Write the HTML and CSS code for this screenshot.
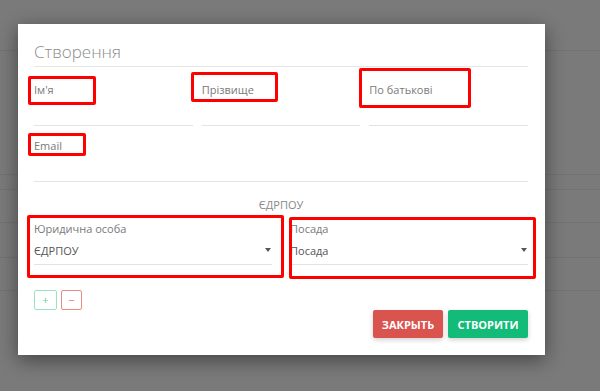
FILE: index.html
```html
<!DOCTYPE html>
<html lang="uk">
<head>
  <meta charset="UTF-8">
  <meta name="viewport" content="width=device-width, initial-scale=1.0">
  <title>Створення</title>
  <link rel="stylesheet" href="styles.css">
</head>
<body>

  <!-- Page behind the dimmed overlay -->
  <div class="page">
    <div class="page-row r1"></div>
    <div class="page-row r2"></div>
    <div class="page-row r3"></div>
    <div class="page-row r4"></div>
    <div class="page-row r5"></div>
    <div class="page-row r6"></div>
  </div>

  <div class="modal">
    <h2 class="modal-title">Створення</h2>

    <!-- Name fields -->
    <div class="name-row">
      <div class="field">
        <label>Ім'я</label>
        <div class="input"></div>
      </div>
      <div class="field">
        <label>Прізвище</label>
        <div class="input"></div>
      </div>
      <div class="field">
        <label>По батькові</label>
        <div class="input"></div>
      </div>
    </div>

    <div class="field email">
      <label>Email</label>
      <div class="input"></div>
    </div>

    <div class="section-title">ЄДРПОУ</div>

    <!-- Selects -->
    <div class="select-row">
      <div class="select-field">
        <label>Юридична особа</label>
        <div class="select">ЄДРПОУ <span class="caret"></span></div>
      </div>
      <div class="select-field">
        <label>Посада</label>
        <div class="select">Посада <span class="caret"></span></div>
      </div>
    </div>

    <div class="add-remove">
      <button class="btn-small plus">+</button>
      <button class="btn-small minus">&minus;</button>
    </div>

    <div class="modal-footer">
      <button class="btn btn-close">Закрыть</button>
      <button class="btn btn-create">Створити</button>
    </div>

    <!-- Red annotation frames drawn over the form -->
    <div class="mark m-name"></div>
    <div class="mark m-surname"></div>
    <div class="mark m-patronymic"></div>
    <div class="mark m-email"></div>
    <div class="mark m-company"></div>
    <div class="mark m-position"></div>
  </div>

</body>
</html>
```

FILE: styles.css
```css
body {
  margin: 0;
  height: 391px;
  overflow: hidden;
  background-color: #7a7a7a;
  font-family: "Open Sans", Arial, sans-serif;
}

.page-row {
  border-bottom: 1px solid #727272;
}

.r1 { height: 50px; }
.r2 { height: 123px; }
.r3 { height: 14px; }
.r4 { height: 32px; }
.r5 { height: 34px; }
.r6 { height: 32px; }

.modal {
  position: absolute;
  left: 18px;
  top: 24px;
  width: 527px;
  height: 331px;
  box-sizing: border-box;
  padding: 17px 17px 0 16px;
  background-color: white;
  box-shadow: 0 5px 18px rgba(0, 0, 0, 0.45);
}

.modal-title {
  margin: 0;
  padding-bottom: 3px;
  font-size: 17px;
  line-height: 22px;
  font-weight: 300;
  color: #8c8c8c;
  border-bottom: 1px solid #e6e6e6;
}

.name-row {
  display: grid;
  grid-template-columns: 1fr 1fr 1fr;
  gap: 9px;
  padding-top: 15px;
}

label {
  display: block;
  font-size: 11px;
  line-height: 16px;
  color: #7a7a7a;
}

.input {
  height: 27px;
  border-bottom: 1px solid #e3e3e3;
}

.email {
  padding-top: 12px;
}

.section-title {
  margin-top: 15px;
  text-align: center;
  font-size: 11px;
  line-height: 16px;
  color: #888;
}

.select-row {
  display: grid;
  grid-template-columns: 1fr 1fr;
  gap: 18px;
  margin-top: 8px;
}

.select {
  position: relative;
  height: 25px;
  margin-top: 3px;
  padding-top: 3px;
  box-sizing: border-box;
  font-size: 11px;
  line-height: 16px;
  color: #555;
  border-bottom: 1px solid #e3e3e3;
}

.caret {
  position: absolute;
  right: 1px;
  top: 8px;
  border-left: 3.5px solid transparent;
  border-right: 3.5px solid transparent;
  border-top: 4px solid #555;
}

.add-remove {
  display: flex;
  gap: 4px;
  margin-top: 25px;
}

.btn-small {
  width: 23px;
  height: 20px;
  padding: 0;
  background: white;
  border-radius: 2px;
  font-family: "Open Sans", Arial, sans-serif;
  font-size: 11px;
  line-height: 16px;
}

.plus {
  border: 1px solid #97e3c4;
  color: #5ccf9f;
}

.minus {
  width: 21px;
  border: 1px solid #ec8a87;
  color: #e26e6a;
}

.modal-footer {
  display: flex;
  justify-content: flex-end;
  gap: 5px;
}

.btn {
  height: 28px;
  border: none;
  border-radius: 2px;
  color: white;
  font-family: "Open Sans", Arial, sans-serif;
  font-size: 11px;
  font-weight: 700;
  text-transform: uppercase;
  box-shadow: 0 2px 5px rgba(0, 0, 0, 0.18);
}

.btn-close {
  width: 70px;
  background-color: #d9534f;
}

.btn-create {
  width: 80px;
  background-color: #12bb78;
}

.mark {
  position: absolute;
  border: 3px solid #ff0000;
  border-radius: 2px;
  box-sizing: border-box;
}

.m-name { left: 10px; top: 52px; width: 68px; height: 29px; }
.m-surname { left: 173px; top: 48px; width: 87px; height: 30px; }
.m-patronymic { left: 341px; top: 44px; width: 112px; height: 40px; }
.m-email { left: 10px; top: 109px; width: 58px; height: 23px; }
.m-company { left: 9px; top: 191px; width: 257px; height: 63px; }
.m-position { left: 271px; top: 193px; width: 247px; height: 62px; }
```
